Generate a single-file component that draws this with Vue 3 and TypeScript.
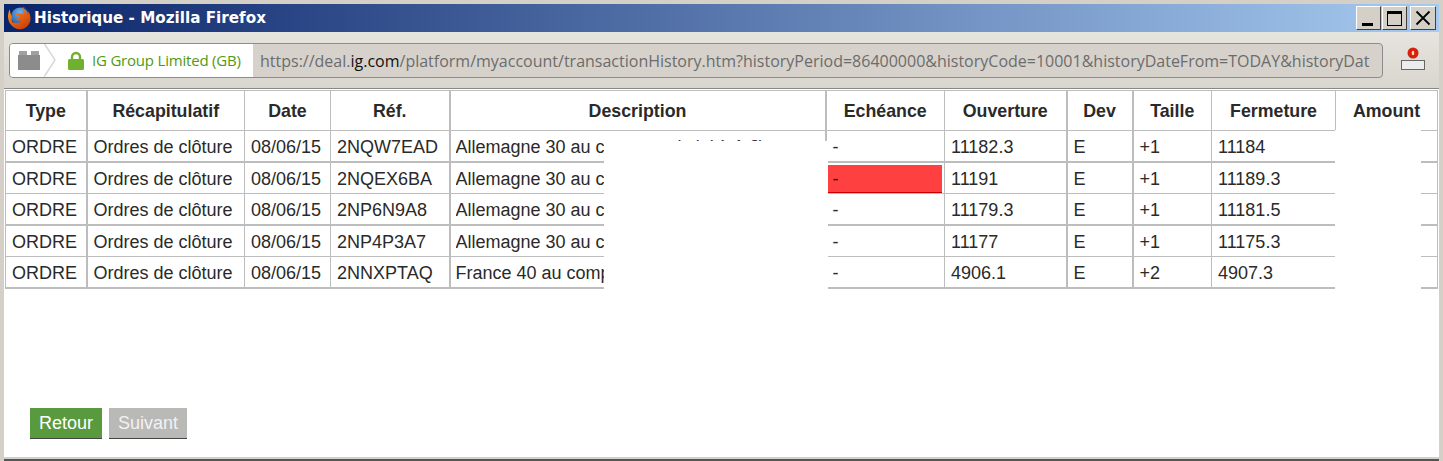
<script setup lang="ts">
interface Row { type: string; sum: string; date: string; ref: string; desc: string; ech: string; open: string; dev: string; size: string; close: string; thick: boolean; alert?: boolean }
const headers: string[] = ['Type', 'Récapitulatif', 'Date', 'Réf.', 'Description', 'Echéance', 'Ouverture', 'Dev', 'Taille', 'Fermeture']
const widths: number[] = [81, 158, 86, 119, 376, 119, 122, 66, 79, 124]
const de = 'Allemagne 30 au comptant (mini à 1 €)'
const rows: Row[] = [
  { type: 'ORDRE', sum: 'Ordres de clôture', date: '08/06/15', ref: '2NQW7EAD', desc: de, ech: '-', open: '11182.3', dev: 'E', size: '+1', close: '11184', thick: true },
  { type: 'ORDRE', sum: 'Ordres de clôture', date: '08/06/15', ref: '2NQEX6BA', desc: de, ech: '-', open: '11191', dev: 'E', size: '+1', close: '11189.3', thick: false, alert: true },
  { type: 'ORDRE', sum: 'Ordres de clôture', date: '08/06/15', ref: '2NP6N9A8', desc: de, ech: '-', open: '11179.3', dev: 'E', size: '+1', close: '11181.5', thick: true },
  { type: 'ORDRE', sum: 'Ordres de clôture', date: '08/06/15', ref: '2NP4P3A7', desc: de, ech: '-', open: '11177', dev: 'E', size: '+1', close: '11175.3', thick: false },
  { type: 'ORDRE', sum: 'Ordres de clôture', date: '08/06/15', ref: '2NNXPTAQ', desc: 'France 40 au comptant (mini à 1 €)', ech: '-', open: '4906.1', dev: 'E', size: '+2', close: '4907.3', thick: true },
]
</script>

<template>
  <div class="window">
    <header class="titlebar">
      <svg class="fox" width="24" height="24" viewBox="0 0 24 24">
        <defs>
          <radialGradient id="globe" cx="0.5" cy="0.3" r="0.8">
            <stop offset="0" stop-color="#6fb4ee" />
            <stop offset="1" stop-color="#1f4f9e" />
          </radialGradient>
          <linearGradient id="fur" x1="0" y1="0" x2="0.7" y2="1">
            <stop offset="0" stop-color="#f9a51e" />
            <stop offset="0.55" stop-color="#e8620f" />
            <stop offset="1" stop-color="#c8400f" />
          </linearGradient>
        </defs>
        <circle cx="13" cy="10.500" r="9" fill="url(#globe)" />
        <path d="M2.800 3.500C.5 7.500.3 13 3 17.500c2.500 4 6.500 6 10.500 5.800 5.500-.3 9.800-5 10-10.300.1-3-.8-5.800-2.500-8 .4 2 .2 3.800-.5 5-.3-3.300-2.300-7-6-9 1.800 2.600 2.600 5.500 1.500 7.500-1.300-1-3.300-1.500-5-1.200-1.200.2-2 .8-2.500 1.500.9 1 2.300 1.300 4 1.300-.3 1.500-1.800 2.600-3.500 2.700 1 1.900 3.800 2.700 6 1.300-1.200 2.600-4.400 3.700-7 2.600C5.500 17.500 4 14.500 5 11.500 4 9 3.200 6.500 2.800 3.500Z" fill="url(#fur)" />
        <path d="M15 .8c2.800.9 5.200 3 6.200 6.200-.6-2.700-3.300-5.700-6.200-6.200Z" fill="#ffcb2f" />
      </svg>
      <span class="title">Historique - Mozilla Firefox</span>
      <div class="controls">
        <button class="ctl" aria-label="Réduire"><i class="min"></i></button>
        <button class="ctl" aria-label="Agrandir"><i class="max"></i></button>
        <button class="ctl close" aria-label="Fermer">
          <svg width="16" height="16" viewBox="0 0 16 16"><path d="M1.500 1.500l13 13M14.500 1.500l-13 13" stroke="#000" stroke-width="1.800" /></svg>
        </button>
      </div>
    </header>

    <div class="toolbar">
      <div class="urlbar">
        <div class="identity">
          <svg class="tabs" width="23" height="21" viewBox="0 0 23 21">
            <rect x="1" y="1" width="8" height="4" fill="#a0a0a0" />
            <rect x="13" y="1" width="8" height="4" fill="#a0a0a0" />
            <rect x="0" y="5" width="22" height="15" fill="#8c8c8c" />
          </svg>
          <svg class="chev" width="12" height="34" viewBox="0 0 12 34">
            <path d="M0 0 11 17 0 34" fill="none" stroke="#d8d8d8" stroke-width="1.500" />
          </svg>
          <svg class="lock" width="16" height="19" viewBox="0 0 16 19">
            <path d="M4 9V6a4 4 0 0 1 8 0v3" fill="none" stroke="#6fb02f" stroke-width="2.400" />
            <rect x="0" y="8" width="16" height="11" rx="1.500" fill="#6fb02f" />
          </svg>
          <span class="org">IG Group Limited (GB)</span>
        </div>
        <div class="url">https://deal.<b>ig.com</b>/platform/myaccount/transactionHistory.htm?historyPeriod=86400000&amp;historyCode=10001&amp;historyDateFrom=TODAY&amp;historyDat</div>
      </div>
      <svg class="notify" width="26" height="24" viewBox="0 0 26 24">
        <circle cx="13" cy="6" r="5.500" fill="#d8200c" />
        <ellipse cx="13" cy="6" rx="1.300" ry="2.200" fill="#f6d6c8" />
        <rect x="1.500" y="13.500" width="23" height="9" fill="#ececec" stroke="#666" />
      </svg>
    </div>

    <main class="content">
      <table class="grid">
        <colgroup>
          <col v-for="(w, i) in widths" :key="i" :style="{ width: w + 'px' }" />
          <col class="last" />
        </colgroup>
        <thead>
          <tr>
            <th v-for="h in headers" :key="h">{{ h }}</th>
            <th class="amount">Amount</th>
          </tr>
        </thead>
        <tbody>
          <tr v-for="r in rows" :key="r.ref" :class="{ thick: r.thick }">
            <td>{{ r.type }}</td>
            <td>{{ r.sum }}</td>
            <td>{{ r.date }}</td>
            <td>{{ r.ref }}</td>
            <td class="desc"><span>{{ r.desc }}</span></td>
            <td :class="{ alert: r.alert }">{{ r.ech }}</td>
            <td>{{ r.open }}</td>
            <td>{{ r.dev }}</td>
            <td>{{ r.size }}</td>
            <td>{{ r.close }}</td>
            <td></td>
          </tr>
        </tbody>
      </table>
      <div class="mask mask-desc"></div>
      <div class="mask mask-amount"></div>
      <div class="actions">
        <button class="btn green">Retour</button>
        <button class="btn grey">Suivant</button>
      </div>
    </main>
  </div>
</template>

<style>
html, body { margin: 0; background: #d4d0c8; }
</style>

<style scoped>
.window {
  width: 1443px;
  height: 461px;
  box-sizing: border-box;
  border: solid #d4d0c8;
  border-width: 4px 4px 0;
  display: flex;
  flex-direction: column;
  overflow: hidden;
  background: #d4d0c8;
  font-family: "Liberation Sans", Arial, sans-serif;
  box-shadow: inset 0 -2px 0 #555;
}
.titlebar {
  height: 28px;
  flex: none;
  display: flex;
  align-items: center;
  background: linear-gradient(90deg, #0a246a, #a6caf0);
}
.fox { margin-left: 3px; flex: none; }
.title {
  margin-left: 3px;
  color: #fff;
  font: 700 15.200px "DejaVu Sans", Verdana, sans-serif;
  white-space: nowrap;
}
.controls { margin-left: auto; margin-right: 3px; display: flex; gap: 1px; }
.ctl {
  width: 25px;
  height: 24px;
  padding: 0;
  background: #d4d0c8;
  border: 1px solid;
  border-color: #fff #404040 #404040 #fff;
  display: flex;
  align-items: center;
  justify-content: center;
  position: relative;
}
.close { margin-left: 2px; width: 26px; }
.min { position: absolute; left: 5px; bottom: 3px; width: 11px; height: 3px; background: #000; }
.max { width: 13px; height: 11px; border: 1px solid #000; border-top-width: 3px; }
.toolbar {
  height: 57px;
  flex: none;
  box-sizing: border-box;
  display: flex;
  align-items: center;
  gap: 17px;
  padding: 0 13px 0 5px;
  background: linear-gradient(#e6e4de, #d9d6cf);
  border-bottom: 1px solid #888;
}
.urlbar {
  flex: 1;
  min-width: 0;
  height: 35px;
  box-sizing: border-box;
  display: flex;
  border: 1px solid #8c8c8c;
  border-radius: 4px;
  overflow: hidden;
  background: #d6d2cb;
}
.identity {
  width: 243px;
  flex: none;
  display: flex;
  align-items: center;
  background: #fff;
  position: relative;
}
.tabs { margin-left: 8px; flex: none; }
.chev { margin-left: 3px; flex: none; }
.lock { margin-left: 12px; flex: none; }
.org {
  margin-left: 8px;
  color: #4f9a12;
  font: 15px "Open Sans", sans-serif;
  white-space: nowrap;
  letter-spacing: -0.2px;
}
.url {
  flex: 1;
  min-width: 0;
  margin: 0 10px 0 7px;
  color: #6c6c6c;
  font: 16px/35px "Open Sans", sans-serif;
  white-space: nowrap;
  overflow: hidden;
}
.url b { font-weight: 400; color: #111; }
.notify { flex: none; margin-top: -2px; }
.content {
  flex: 1;
  min-height: 0;
  margin-bottom: 4px;
  background: #fff;
  position: relative;
  padding: 1px 0 0 1px;
}
.grid {
  border-collapse: collapse;
  table-layout: fixed;
  width: 1433px;
  color: #2a2a2a;
  font-size: 18px;
}
.grid th, .grid td {
  border: 1px solid #bdbdbd;
  padding: 0 6px;
  overflow: hidden;
  white-space: nowrap;
}
.grid th:nth-child(2), .grid td:nth-child(2),
.grid th:nth-child(5), .grid td:nth-child(5),
.grid th:nth-child(6), .grid td:nth-child(6),
.grid th:nth-child(8), .grid td:nth-child(8),
.grid th:nth-child(9), .grid td:nth-child(9) {
  border-left-width: 2px;
}
.grid th {
  height: 38px;
  font-weight: 700;
  font-size: 17.800px;
  text-align: center;
  padding: 1px 0 0;
}
.grid td { height: 28px; padding-top: 2px; }
.grid tr.thick td { border-bottom-width: 2px; }
.grid td.desc { padding-left: 5px; }
.grid td.alert {
  background: linear-gradient(#ff4040 27px, #c80000 27px) 0 100% / 115px 28px no-repeat;
  border-bottom-color: #bdbdbd;
  color: #111;
}
.desc span { display: block; overflow: hidden; }
.mask { position: absolute; background: #fff; }
.mask-desc { left: 600px; top: 52px; width: 224px; height: 148px; }
.mask-amount { left: 1331px; top: 41px; width: 86px; height: 160px; }
.actions {
  position: absolute;
  left: 26px;
  bottom: 18px;
  display: flex;
  gap: 7px;
}
.btn {
  height: 31px;
  padding: 0;
  border: 0;
  border-bottom: 1px solid #444;
  color: #fff;
  font: 18px "Liberation Sans", Arial, sans-serif;
}
.green { background: #5a9a3f; width: 72px; }
.grey { background: #b9b9b7; color: #f2f2f2; width: 78px; }
</style>
